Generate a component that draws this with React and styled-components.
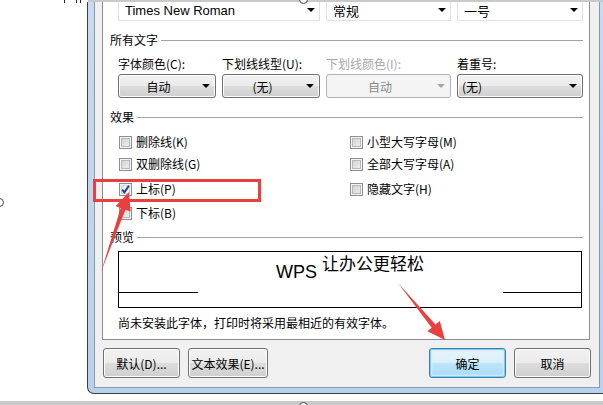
import React from "react";
import styled, { createGlobalStyle, css } from "styled-components";

const Global = createGlobalStyle`
  html, body { margin: 0; padding: 0; background: #fff; }
  body {
    width: 603px; height: 405px; overflow: hidden;
    font-family: "Noto Sans CJK SC", "Noto Sans", sans-serif;
    font-size: 12px; color: #000;
  }
  * { box-sizing: border-box; }
`;

const Page = styled.div`
  position: relative;
  width: 603px;
  height: 405px;
  display: flex;
  flex-direction: column;
  overflow: hidden;
  background: #fff;
`;

const TopRow = styled.div`
  display: flex;
  height: 2px;
  flex: none;
`;

const MarkArea = styled.div`
  width: 88px;
  display: flex;
  justify-content: flex-end;
  align-items: flex-start;
  gap: 9px;
  padding-right: 7px;
`;

const Mark = styled.span`
  flex: none;
  width: ${(p) => p.$w}px;
  height: 3px;
  border-left: 1px solid #222;
  border-right: ${(p) => (p.$w > 3 ? "1px solid #222" : "none")};
`;

const TopStrip = styled.div`
  flex: 1;
  background: #c9c9c9;
`;

const MainRow = styled.div`
  display: flex;
  height: 392px;
  flex: none;
`;

const Blank = styled.div`
  width: 87px;
  flex: none;
`;

const Window = styled.div`
  flex: 1;
  display: flex;
  border-left: 1px solid #3f3f3f;
  border-bottom: 1px solid #3f3f3f;
  border-bottom-left-radius: 7px;
  background: linear-gradient(to bottom, #c6dbf1, #b8d1ec);
  padding: 0 3px 5px 6px;
`;

const Client = styled.div`
  flex: 1;
  display: flex;
  flex-direction: column;
  background: #f0f0f0;
  border: 1px solid #8c99a6;
  border-top: none;
`;

const TabPage = styled.div`
  flex: 1;
  min-height: 0;
  margin: 0 9px 0 7px;
  background: #fff;
  border: 1px solid #898c95;
  border-top: none;
  overflow: hidden;
  display: flex;
  flex-direction: column;
`;

const FieldGrid = styled.div`
  display: grid;
  grid-template-columns: 98px 98px 125px 126px;
  column-gap: 6px;
  margin: ${(p) => p.$mt}px 0 0 15px;
  height: ${(p) => p.$h}px;
  flex: none;
`;

const Combo = styled.div`
  grid-column: span ${(p) => p.$span || 1};
  display: flex;
  align-items: center;
  background: #fff;
  border: 1px solid #dce2e8;
  padding: 0 4px 0 6px;
  font-family: "Liberation Sans", Arial, "Noto Sans CJK SC", sans-serif;
  font-size: 13px;
`;

const ComboText = styled.span`
  flex: 1;
  white-space: nowrap;
  font-family: ${(p) => (p.$cjk ? '"Noto Sans CJK SC", sans-serif' : "inherit")};
  font-size: 13px;
`;

const Arrow = styled.span`
  flex: none;
  width: 0;
  height: 0;
  margin-left: 4px;
  border-left: 4px solid transparent;
  border-right: 4px solid transparent;
  border-top: 4px solid ${(p) => (p.$disabled ? "#a6a6a6" : "#000")};
`;

const GroupHeader = styled.div`
  display: flex;
  align-items: center;
  height: 16px;
  margin-top: ${(p) => p.$mt}px;
  padding: 0 6px 0 7px;
  flex: none;
`;

const GroupLabel = styled.span`
  line-height: 16px;
  white-space: nowrap;
`;

const GroupLine = styled.span`
  flex: 1;
  height: 1px;
  margin-left: 3px;
  background: #a3a3a3;
`;

const FieldLabel = styled.span`
  line-height: 16px;
  white-space: nowrap;
  color: ${(p) => (p.$disabled ? "#a7a7a7" : "#000")};
`;

const DropButton = styled.div`
  display: flex;
  align-items: center;
  border-radius: 3px;
  padding: 0 5px 0 ${(p) => (p.$left ? 4 : 0)}px;
  ${(p) =>
    p.$disabled
      ? css`
          border: 1px solid #b0b4b8;
          background: #f4f4f4;
          color: #888;
        `
      : css`
          border: 1px solid #707070;
          background: linear-gradient(to bottom, #f2f2f2 0%, #ebebeb 50%, #dddddd 51%, #cfcfcf 100%);
          box-shadow: inset 0 0 0 1px #fbfbfb;
          color: #000;
        `}
`;

const DropText = styled.span`
  flex: 1;
  text-align: ${(p) => (p.$left ? "left" : "center")};
  white-space: nowrap;
`;

const CheckGrid = styled.div`
  display: grid;
  grid-template-columns: 231px auto;
  grid-template-rows: 22px 22px 28px 20px;
  grid-auto-flow: column;
  margin: 6px 0 0 16px;
  flex: none;
`;

const CheckItem = styled.label`
  display: flex;
  align-items: center;
  gap: 4px;
  line-height: 16px;
  white-space: nowrap;
`;

const Box = styled.span`
  position: relative;
  flex: none;
  width: 13px;
  height: 13px;
  border: 1px solid #8e8f8f;
  background: ${(p) =>
    p.$checked
      ? "linear-gradient(135deg, #e4e9ef, #fafcfe)"
      : "linear-gradient(135deg, #cdcdcd, #f3f3f3)"};
  box-shadow: inset 0 0 0 1px #f4f4f4, inset 0 0 0 2px ${(p) => (p.$checked ? "#c9d3de" : "#b9b9b9")};
`;

const CheckSvg = styled.svg`
  position: absolute;
  left: 0;
  top: 0;
  width: 11px;
  height: 11px;
`;

const PreviewBox = styled.div`
  flex: none;
  height: 57px;
  margin: 6px 7px 0 15px;
  border: 1px solid #000;
  background: #fff;
  display: flex;
  flex-direction: column;
`;

const PreviewText = styled.div`
  padding-top: 10px;
  height: 30px;
  line-height: 20px;
  text-align: center;
  font-family: "Liberation Sans", Arial, sans-serif;
  font-size: 18px;
  white-space: nowrap;
`;

const Super = styled.span`
  font-family: "Noto Sans CJK SC", sans-serif;
  font-size: 17px;
  line-height: 0;
  vertical-align: 8px;
`;

const RuleRow = styled.div`
  display: flex;
  justify-content: space-between;
  margin-top: 10px;
`;

const Rule = styled.span`
  width: ${(p) => p.$w}px;
  height: 1px;
  background: #000;
`;

const Note = styled.div`
  flex: none;
  margin: 7px 0 0 15px;
  line-height: 16px;
  white-space: nowrap;
`;

const ButtonBar = styled.div`
  flex: none;
  height: 47px;
  display: flex;
  align-items: flex-start;
  gap: 8px;
  padding: 8px 8px 0 8px;
`;

const Spacer = styled.span`
  flex: 1;
`;

const Button = styled.div`
  flex: none;
  width: ${(p) => p.$w}px;
  height: 30px;
  display: flex;
  align-items: center;
  justify-content: center;
  border-radius: 3px;
  white-space: nowrap;
  ${(p) =>
    p.$primary
      ? css`
          border: 1px solid #3c7fb1;
          background: linear-gradient(to bottom, #e9f5fc 0%, #d8effb 50%, #bde5fc 51%, #a9daf5 100%);
          box-shadow: inset 0 0 0 1px #7fcbf2, inset 0 0 2px 2px #d3eefc;
        `
      : css`
          border: 1px solid #707070;
          background: linear-gradient(to bottom, #f2f2f2 0%, #ebebeb 50%, #dddddd 51%, #cfcfcf 100%);
          box-shadow: inset 0 0 0 1px #fcfcfc;
        `}
`;

const BottomArea = styled.div`
  flex: 1;
  display: flex;
  flex-direction: column;
  justify-content: flex-end;
`;

const BottomStrip = styled.div`
  height: 4px;
  background: #c9c9c9;
`;

const RedRect = styled.div`
  position: absolute;
  left: 93px;
  top: 179px;
  width: 168px;
  height: 23px;
  border: 3px solid #e8403e;
  pointer-events: none;
`;

const Overlay = styled.svg`
  position: absolute;
  left: 0;
  top: 0;
  width: 603px;
  height: 405px;
  pointer-events: none;
`;

const Handle = styled.span`
  position: absolute;
  left: ${(p) => p.$x}px;
  top: ${(p) => p.$y}px;
  width: 9px;
  height: 9px;
  border-radius: 50%;
  border: 1px solid #4a4a4a;
  background: #fff;
`;

const Check = ({ label, checked }) => (
  <CheckItem>
    <Box $checked={checked}>
      {checked && (
        <CheckSvg viewBox="0 0 11 11">
          <path d="M2.2 5.6 L4.4 8.4 L8.9 1.8" fill="none" stroke="#1f3f8f" strokeWidth="1.9" strokeLinejoin="round" />
        </CheckSvg>
      )}
    </Box>
    {label}
  </CheckItem>
);

const Drop = ({ text, disabled, left }) => (
  <DropButton $disabled={disabled} $left={left}>
    <DropText $left={left}>{text}</DropText>
    <Arrow $disabled={disabled} />
  </DropButton>
);

export default function App() {
  return (
    <Page>
      <Global />
      <TopRow>
        <MarkArea>
          <Mark $w={3} />
          <Mark $w={5} />
        </MarkArea>
        <TopStrip />
      </TopRow>
      <MainRow>
        <Blank />
        <Window>
          <Client>
            <TabPage>
              <FieldGrid $mt={-3} $h={22}>
                <Combo $span={2}>
                  <ComboText>Times New Roman</ComboText>
                  <Arrow />
                </Combo>
                <Combo>
                  <ComboText $cjk>常规</ComboText>
                  <Arrow />
                </Combo>
                <Combo>
                  <ComboText $cjk>一号</ComboText>
                  <Arrow />
                </Combo>
              </FieldGrid>

              <GroupHeader $mt={11}>
                <GroupLabel>所有文字</GroupLabel>
                <GroupLine />
              </GroupHeader>

              <FieldGrid $mt={8} $h={16}>
                <FieldLabel>字体颜色(C):</FieldLabel>
                <FieldLabel>下划线线型(U):</FieldLabel>
                <FieldLabel $disabled>下划线颜色(I):</FieldLabel>
                <FieldLabel>着重号:</FieldLabel>
              </FieldGrid>

              <FieldGrid $mt={2} $h={24}>
                <Drop text="自动" />
                <Drop text="(无)" />
                <Drop text="自动" disabled />
                <Drop text="(无)" left />
              </FieldGrid>

              <GroupHeader $mt={11}>
                <GroupLabel>效果</GroupLabel>
                <GroupLine />
              </GroupHeader>

              <CheckGrid>
                <Check label="删除线(K)" />
                <Check label="双删除线(G)" />
                <Check label="上标(P)" checked />
                <Check label="下标(B)" />
                <Check label="小型大写字母(M)" />
                <Check label="全部大写字母(A)" />
                <Check label="隐藏文字(H)" />
              </CheckGrid>

              <GroupHeader $mt={6}>
                <GroupLabel>预览</GroupLabel>
                <GroupLine />
              </GroupHeader>

              <PreviewBox>
                <PreviewText>
                  WPS <Super>让办公更轻松</Super>
                </PreviewText>
                <RuleRow>
                  <Rule $w={79} />
                  <Rule $w={78} />
                </RuleRow>
              </PreviewBox>

              <Note>尚未安装此字体，打印时将采用最相近的有效字体。</Note>
            </TabPage>

            <ButtonBar>
              <Button $w={77}>默认(D)...</Button>
              <Button $w={80}>文本效果(E)...</Button>
              <Spacer />
              <Button $w={77} $primary>确定</Button>
              <Button $w={77}>取消</Button>
            </ButtonBar>
          </Client>
        </Window>
      </MainRow>
      <BottomArea>
        <BottomStrip />
      </BottomArea>

      <RedRect />
      <Overlay viewBox="0 0 603 405">
        <polygon
          points="129,192 130.6,211.5 125.4,209.7 101,272 120.7,208.1 115.6,206.3"
          fill="#e8403e"
        />
        <polygon
          points="445,340 427.4,331.2 431.7,327.7 398,283 435.5,324.5 439.8,321"
          fill="#e8403e"
        />
      </Overlay>
      <Handle $x={299} $y={-5} />
      <Handle $x={299} $y={402} />
      <Handle $x={-5} $y={198} />
    </Page>
  );
}
